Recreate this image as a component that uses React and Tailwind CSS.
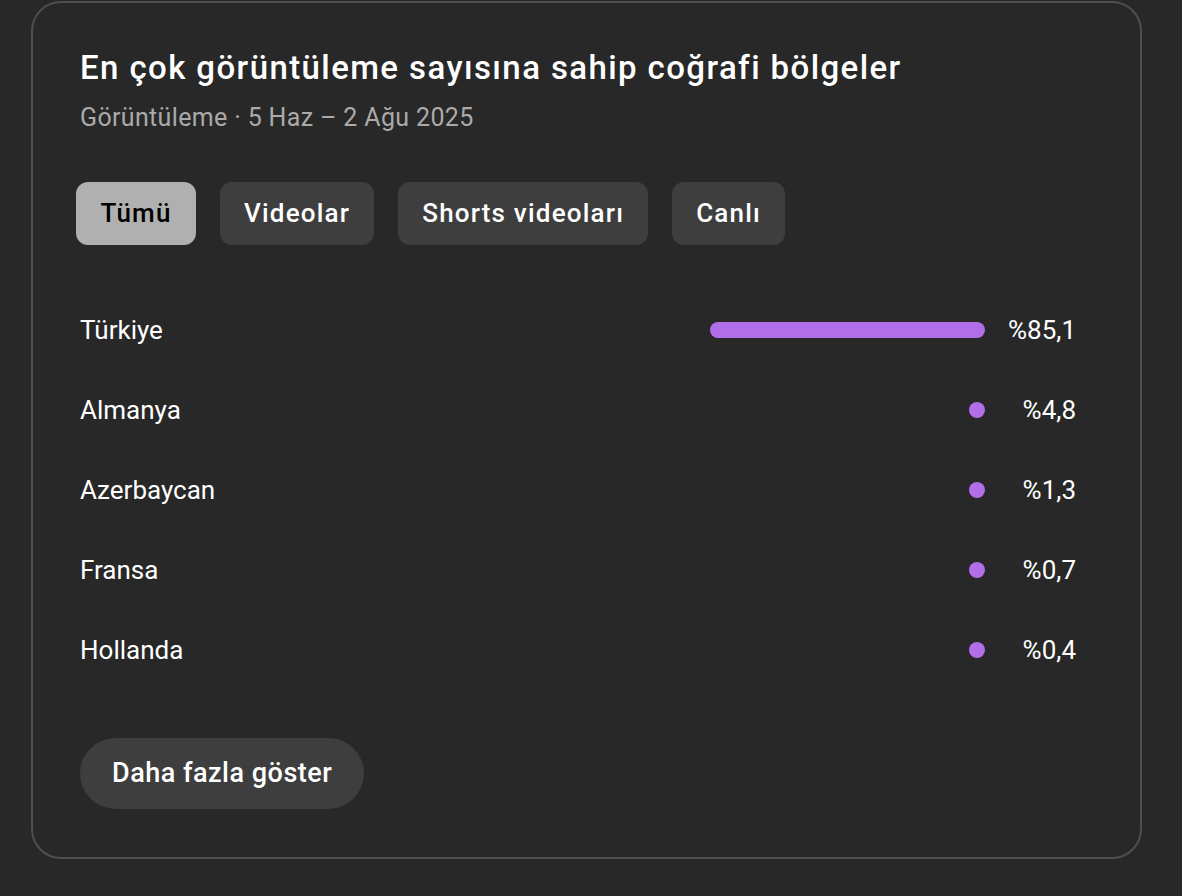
const rows = [
  { name: 'Türkiye', pct: '%85,1', value: 85.1 },
  { name: 'Almanya', pct: '%4,8', value: 4.8 },
  { name: 'Azerbaycan', pct: '%1,3', value: 1.3 },
  { name: 'Fransa', pct: '%0,7', value: 0.7 },
  { name: 'Hollanda', pct: '%0,4', value: 0.4 },
]

const tabs = ['Tümü', 'Videolar', 'Shorts videoları', 'Canlı']

export default function App() {
  return (
    <div className="min-h-screen bg-[#282828] font-['Roboto',sans-serif] pl-[31px] pt-px">
      <div className="w-[1111px] h-[858px] rounded-[30px] border-2 border-[#4f4f4f] pl-[47px] pr-[64px] pt-[43px]">
        <h1 className="text-[33px] leading-[44px] font-medium text-white tracking-[1.4px]">
          En çok görüntüleme sayısına sahip coğrafi bölgeler
        </h1>
        <p className="text-[25px] leading-[32px] text-[#aaaaaa] tracking-[0.35px] mt-[12px]">
          Görüntüleme · 5 Haz – 2 Ağu 2025
        </p>

        {/* content type filter chips */}
        <div className="flex gap-6 mt-[48px] -ml-1">
          {tabs.map((t, i) => (
            <button
              key={t}
              className={
                i === 0
                  ? 'h-[63px] w-[120px] rounded-xl bg-[#b0b0b0] text-black text-[26px] font-medium tracking-[1.2px]'
                  : 'h-[63px] px-6 rounded-xl bg-[#3e3e3e] text-white text-[26px] font-medium tracking-[1.2px]'
              }
            >
              {t}
            </button>
          ))}
        </div>

        <div className="mt-[45px] flex flex-col">
          {rows.map((r) => (
            <div key={r.name} className="h-20 flex items-center">
              <span className="flex-1 text-[26px] text-white">{r.name}</span>
              <div className="w-[323px] flex justify-end">
                <div
                  className="h-4 min-w-4 rounded-full bg-[#b06ee8]"
                  style={{ width: `${(r.value / 85.1) * 275}px` }}
                />
              </div>
              <span className="w-[91px] text-right text-[26px] text-white">{r.pct}</span>
            </div>
          ))}
        </div>

        <button className="mt-[48px] h-[71px] px-8 rounded-full bg-[#3e3e3e] text-white text-[27px] font-medium tracking-[0.5px]">
          Daha fazla göster
        </button>
      </div>
    </div>
  )
}
